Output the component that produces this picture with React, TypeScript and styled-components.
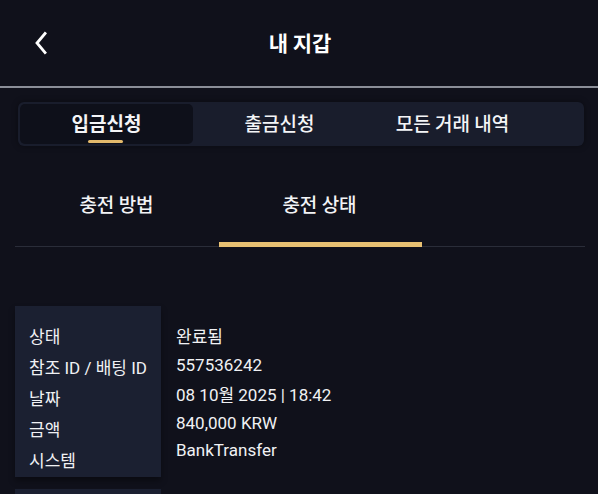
import React from "react";
import styled, { createGlobalStyle } from "styled-components";

const Global = createGlobalStyle`
  html, body { margin: 0; padding: 0; background: #10111b; }
  body { font-family: Roboto, "Noto Sans CJK KR", sans-serif; color: #f2f3f5; }
  * { box-sizing: border-box; }
`;

const Page = styled.div`
  width: 598px;
  height: 494px;
  overflow: hidden;
  background: #10111b;
`;

const Header = styled.header`
  height: 88px;
  display: flex;
  align-items: center;
  justify-content: center;
  position: relative;
  border-bottom: 2px solid #8b8e98;
`;

const BackButton = styled.button`
  position: absolute;
  left: 28px;
  top: 30px;
  width: 26px;
  height: 26px;
  background: none;
  border: 0;
  padding: 0;
  display: flex;
  align-items: center;
  justify-content: center;
  cursor: pointer;
`;

const Title = styled.h1`
  margin: 0 0 2px 2px;
  font-family: "Noto Sans CJK KR", sans-serif;
  font-size: 21px;
  font-weight: 700;
  color: #ffffff;
  line-height: 1;
`;

const TopTabs = styled.nav`
  margin: 14px 14px 0 18px;
  height: 44px;
  background: #191d2c;
  border-radius: 6px;
  padding: 2px;
  display: flex;
  box-shadow: 0 0 6px rgba(0, 0, 0, 0.4);
`;

const TopTab = styled.div<{ $active?: boolean }>`
  width: 173px;
  border-radius: 5px;
  background: ${(p) => (p.$active ? "#0e101a" : "transparent")};
  display: flex;
  align-items: center;
  justify-content: center;
  position: relative;
  font-family: "Noto Sans CJK KR", sans-serif;
  font-size: 19px;
  font-weight: ${(p) => (p.$active ? 700 : 500)};
  color: #f4f5f7;
  padding-bottom: 3px;
  &::after {
    content: "";
    display: ${(p) => (p.$active ? "block" : "none")};
    position: absolute;
    left: 68px;
    bottom: 1px;
    width: 35px;
    height: 3px;
    border-radius: 2px;
    background: #e3b96b;
  }
`;

const SubTabs = styled.div`
  margin: 0 13px 0 15px;
  height: 101px;
  display: flex;
  border-bottom: 1px solid #2a2d39;
`;

const SubTab = styled.div<{ $active?: boolean }>`
  width: 203px;
  display: flex;
  justify-content: center;
  padding-top: 45px;
  font-family: "Noto Sans CJK KR", sans-serif;
  font-size: 19px;
  line-height: 26px;
  font-weight: 500;
  color: #f2f3f5;
  position: relative;
  &::after {
    content: "";
    display: ${(p) => (p.$active ? "block" : "none")};
    position: absolute;
    left: 1px;
    right: -1px;
    bottom: -1px;
    height: 5px;
    background: #e8c173;
  }
`;

const Details = styled.section`
  margin: 59px 0 0 15px;
  display: flex;
`;

const Labels = styled.div`
  width: 146px;
  height: 171px;
  background: #1b2031;
  padding: 16px 0 0 14px;
  display: flex;
  flex-direction: column;
  box-shadow: 0 4px 6px rgba(0, 0, 0, 0.35);
`;

const Label = styled.div`
  height: 31px;
  font-size: 17px;
  line-height: 31px;
  color: #f0f1f4;
  white-space: nowrap;
`;

const Values = styled.div`
  padding: 17px 0 0 15px;
  display: flex;
  flex-direction: column;
`;

const Value = styled.div<{ $h: number }>`
  height: ${(p) => p.$h}px;
  font-size: 17px;
  line-height: 28px;
  color: #f0f1f4;
  white-space: nowrap;
`;

const NextPanel = styled.div`
  margin: 12px 0 0 15px;
  width: 146px;
  height: 20px;
  background: #1b2031;
`;

export default function App() {
  const labels = ["상태", "참조 ID / 배팅 ID", "날짜", "금액", "시스템"];
  const values: [string, number][] = [
    ["완료됨", 28],
    ["557536242", 30],
    ["08 10월 2025 | 18:42", 28],
    ["840,000 KRW", 27],
    ["BankTransfer", 28],
  ];
  return (
    <Page>
      <Global />
      <Header>
        <BackButton aria-label="뒤로">
          <svg width="16" height="24" viewBox="0 0 16 24" fill="none">
            <path d="M12 2.5 L4 12 L12 21.5" stroke="#ffffff" strokeWidth="2.8" strokeLinecap="square" strokeLinejoin="miter" />
          </svg>
        </BackButton>
        <Title>내 지갑</Title>
      </Header>
      <TopTabs>
        <TopTab $active>입금신청</TopTab>
        <TopTab>출금신청</TopTab>
        <TopTab>모든 거래 내역</TopTab>
      </TopTabs>
      <SubTabs>
        <SubTab>충전 방법</SubTab>
        <SubTab $active>충전 상태</SubTab>
      </SubTabs>
      <Details>
        <Labels>
          {labels.map((l) => (
            <Label key={l}>{l}</Label>
          ))}
        </Labels>
        <Values>
          {values.map(([v, h]) => (
            <Value key={v} $h={h}>
              {v}
            </Value>
          ))}
        </Values>
      </Details>
      <NextPanel />
    </Page>
  );
}
